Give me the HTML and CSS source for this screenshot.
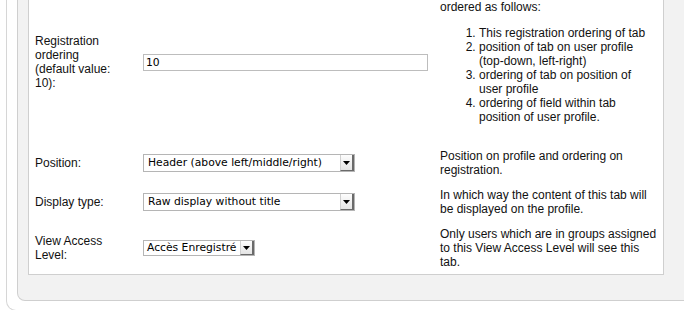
FILE: index.html
```html
<!DOCTYPE html>
<html lang="en">
<head>
  <meta charset="UTF-8"/>
  <title>Tab settings</title>
  <link rel="stylesheet" href="styles.css">
</head>
<body>

<div class="outer">
  <div class="panel">
    <div class="box">
      <table class="form">
        <tr class="first">
          <td class="label">Registration ordering (default value: 10):</td>
          <td class="field"><input type="text" class="text" value="10"/></td>
          <td class="desc">
            <p>ordered as follows:</p>
            <ol>
              <li>This registration ordering of tab</li>
              <li>position of tab on user profile (top-down, left-right)</li>
              <li>ordering of tab on position of user profile</li>
              <li>ordering of field within tab position of user profile.</li>
            </ol>
          </td>
        </tr>
        <tr>
          <td class="label">Position:</td>
          <td class="field">
            <span class="select select-wide">
              <span class="select-text">Header (above left/middle/right)</span>
              <span class="select-btn"><svg width="7" height="4" viewBox="0 0 7 4"><polygon points="0,0 7,0 3.5,4" fill="#000"/></svg></span>
            </span>
          </td>
          <td class="desc">Position on profile and ordering on registration.</td>
        </tr>
        <tr>
          <td class="label">Display type:</td>
          <td class="field">
            <span class="select select-wide">
              <span class="select-text">Raw display without title</span>
              <span class="select-btn"><svg width="7" height="4" viewBox="0 0 7 4"><polygon points="0,0 7,0 3.5,4" fill="#000"/></svg></span>
            </span>
          </td>
          <td class="desc">In which way the content of this tab will be displayed on the profile.</td>
        </tr>
        <tr>
          <td class="label">View Access Level:</td>
          <td class="field">
            <span class="select select-small">
              <span class="select-text">Accès Enregistré</span>
              <span class="select-btn"><svg width="7" height="4" viewBox="0 0 7 4"><polygon points="0,0 7,0 3.5,4" fill="#000"/></svg></span>
            </span>
          </td>
          <td class="desc">Only users which are in groups assigned to this View Access Level will see this tab.</td>
        </tr>
      </table>
    </div>
  </div>
</div>

</body>
</html>
```

FILE: styles.css
```css
html, body {
  margin: 0;
  padding: 0;
  overflow: hidden;
  background: #fff;
}
body {
  font-family: "Liberation Sans", Arial, sans-serif;
  font-size: 12px;
  line-height: 14px;
  color: #111;
}
.outer {
  width: 720px;
  margin-top: -5px;
  margin-left: 6px;
  padding: 0 0 9px 10px;
  border: 1px solid #d6d6d6;
  border-top: 0;
  border-radius: 0 0 0 10px;
}
.panel {
  background: #f2f2f2;
  border: 1px solid #cfcfcf;
  border-top: 0;
  border-radius: 0 0 0 8px;
  padding: 0 0 25px 10px;
}
.box {
  width: 634px;
  background: #fff;
  border: 1px solid #cfcfcf;
  border-top: 0;
}
.form {
  border-collapse: collapse;
  width: 634px;
  table-layout: fixed;
}
.form td {
  padding: 6px 6px 5px;
  vertical-align: middle;
}
.form tr.first td {
  padding-top: 5px;
  padding-bottom: 19px;
}
.form td.label {
  width: 84px;
  padding-right: 18px;
}
.form td.field {
  width: 285px;
}
.form td.desc {
  width: 219px;
  padding-right: 4px;
}
.desc p {
  margin: 0 0 12px;
}
.desc ol {
  margin: 0;
  padding: 0 3px 0 39px;
}
.text {
  display: block;
  box-sizing: border-box;
  width: 285px;
  height: 17px;
  margin: 0;
  padding: 0 2px;
  border: 1px solid #bdbdbd;
  font-family: "DejaVu Sans", sans-serif;
  font-size: 10.75px;
  color: #000;
}
.select {
  display: flex;
  box-sizing: border-box;
  height: 18px;
  border: 1px solid #b5b5b5;
  background: #fff;
  font-family: "DejaVu Sans", sans-serif;
  font-size: 10.75px;
  line-height: 16px;
  color: #000;
}
.select-wide {
  width: 212px;
}
.select-small {
  width: 112px;
  height: 16px;
  line-height: 14px;
}
.select-text {
  flex: 1;
  padding-left: 4px;
  white-space: nowrap;
  overflow: hidden;
}
.select-small .select-text {
  padding-left: 3px;
}
.select-btn {
  display: flex;
  align-items: center;
  justify-content: center;
  width: 11px;
  background: linear-gradient(#fdfdfd, #e4e4e4);
  border-left: 1px solid #d0d0d0;
  border-right: 2px solid #6a6a6a;
  border-bottom: 1px solid #6a6a6a;
}
```
